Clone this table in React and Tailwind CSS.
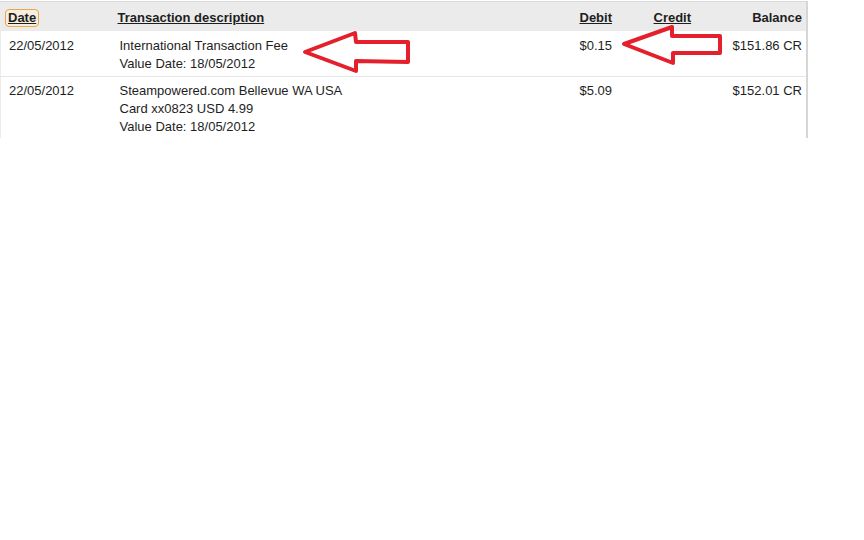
import React from "react";

const rows = [
  {
    date: "22/05/2012",
    lines: ["International Transaction Fee", "Value Date: 18/05/2012"],
    debit: "$0.15",
    credit: "",
    balance: "$151.86 CR",
    pad: "pt-[6px] pb-[3px]",
  },
  {
    date: "22/05/2012",
    lines: ["Steampowered.com Bellevue WA USA", "Card xx0823 USD 4.99", "Value Date: 18/05/2012"],
    debit: "$5.09",
    credit: "",
    balance: "$152.01 CR",
    pad: "pt-[5px] pb-[4px]",
  },
];

function Arrow({ points }) {
  return (
    <polygon
      points={points}
      fill="none"
      stroke="#e3202b"
      strokeWidth="4"
      strokeLinejoin="round"
    />
  );
}

export default function App() {
  return (
    <div className="relative w-[864px] h-[540px] bg-white font-['Liberation_Sans',Arial,sans-serif] text-[#1e1e1e]">
      <div className="w-[808px] h-[138px] overflow-hidden pt-px">
        <table className="w-[808px] table-fixed border-collapse border-t border-t-[#dadada] border-r-2 border-r-[#d6d6d6] border-l border-l-[#ececec]">
          <colgroup>
            <col className="w-[111px]" />
            <col className="w-[460px]" />
            <col className="w-[74px]" />
            <col className="w-[80px]" />
            <col />
          </colgroup>
          <thead>
            <tr className="bg-[#ebebeb] h-[29px] text-[13px] font-bold">
              <th className="text-left pl-[5px] pt-[2px] font-bold">
                <span className="inline-block px-[2px] leading-[16px] rounded-[3px] outline outline-[1.5px] outline-[#e9a749] bg-[#f6eedf] underline">
                  Date
                </span>
              </th>
              <th className="text-left pl-[6px] pt-[2px] underline">Transaction description</th>
              <th className="text-left pl-[8px] pt-[2px] underline">Debit</th>
              <th className="text-left pl-[8px] pt-[2px] underline">Credit</th>
              <th className="text-right pr-[4px] pt-[2px]">Balance</th>
            </tr>
          </thead>
          <tbody className="text-[13px] leading-[18px]">
            {rows.map((r, i) => (
              <tr key={i} className="border-b border-b-[#e6e6e6] align-top">
                <td className={`pl-[8px] ${r.pad}`}>{r.date}</td>
                <td className={`pl-[8px] ${r.pad}`}>
                  {r.lines.map((l) => (
                    <div key={l}>{l}</div>
                  ))}
                </td>
                <td className={`pl-[8px] ${r.pad}`}>{r.debit}</td>
                <td className={`pl-[8px] ${r.pad}`}>{r.credit}</td>
                <td className={`text-right pr-[4px] ${r.pad}`}>{r.balance}</td>
              </tr>
            ))}
          </tbody>
        </table>
      </div>
      <svg className="absolute left-0 top-0 pointer-events-none" width="864" height="140">
        <Arrow points="305,52 355,33 356,42 408,42 408,62 356,61 356,71" />
        <Arrow points="624,44 672,27 672,36 720,36 720,53 673,53 673,63" />
      </svg>
    </div>
  );
}
